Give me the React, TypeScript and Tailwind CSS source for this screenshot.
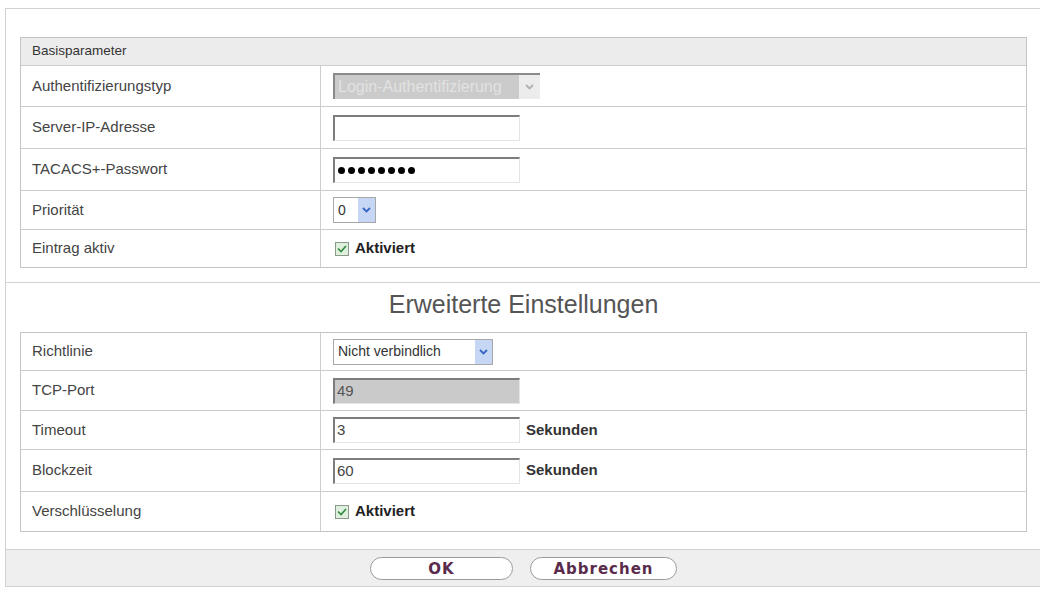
import React from "react";

const font = { fontFamily: '"Liberation Sans", Arial, sans-serif' };
const buttonFont = { fontFamily: '"DejaVu Sans", Verdana, sans-serif' };

const Chevron = ({ color }: { color: string }) => (
    <svg width="9" height="6" viewBox="0 0 9 6">
        <path d="M1 1 L4.5 4.5 L8 1" fill="none" stroke={color} strokeWidth="1.8" />
    </svg>
);

const Row = ({ label, height, children, last }: { label: string; height: string; children?: React.ReactNode; last?: boolean }) =>
{
    return (
        <div className={`flex ${height} ${last ? "" : "border-b border-[#cdcdcd]"}`}>
            <div className="w-[300px] shrink-0 border-r border-[#cdcdcd] pl-[11px] flex items-center text-[15px] text-[#444]">{label}</div>
            <div className="flex-1 pl-[12px] flex items-center">{children}</div>
        </div>
    );
};

const TextBox = ({ value, disabled, password }: { value?: string; disabled?: boolean; password?: boolean }) => (
    <div className={`w-[187px] h-[26px] border-t-2 border-l-2 border-t-[#7d7d7d] border-l-[#7d7d7d] border-r border-b border-r-[#e4e4e4] border-b-[#e4e4e4] flex items-center pl-[2px] text-[15px] ${disabled ? "bg-[#cacaca] text-[#555]" : "bg-white text-[#444]"}`}>
        {password
            ? <span className="flex gap-[3px] pl-[1px]">
                {[0, 1, 2, 3, 4, 5, 6, 7].map((i) => <span key={i} className="w-[7px] h-[7px] rounded-full bg-black" />)}
              </span>
            : value}
    </div>
);

const Select = ({ value, width }: { value: string; width: string }) => (
    <div className={`${width} h-[26px] border border-[#a8a8a8] bg-white flex items-center justify-between text-[14px] text-[#333]`}>
        <span className="pl-[4px]">{value}</span>
        <span className="w-[17px] h-full bg-[#c5d7f4] flex items-center justify-center">
            <Chevron color="#3866c4" />
        </span>
    </div>
);

const Check = () => (
    <div className="flex items-center gap-[6px] pl-[2px]">
        <span className="w-[14px] h-[14px] border border-[#8a9a8a] bg-[#dff0df] flex items-center justify-center">
            <svg width="10" height="8" viewBox="0 0 10 8">
                <path d="M1 3.5 L4 6.5 L9 1" fill="none" stroke="#2f8a3a" strokeWidth="1.6" />
            </svg>
        </span>
        <span className="text-[15px] font-bold text-[#222]">Aktiviert</span>
    </div>
);

const Seconds = () => <span className="ml-[6px] text-[15px] font-bold text-[#333]">Sekunden</span>;

export default function App()
{
    return (
        <div className="w-[1040px] h-[590px] bg-white pt-[8px] pl-[5px] overflow-hidden" style={font}>
            <div className="w-[1040px] border-t border-l border-[#d2d2d2]">
                <div className="pt-[28px] pb-[14px] pl-[14px] w-[1021px]">
                    <div className="border border-[#c4c4c4]">
                        <div className="h-[28px] bg-[#ececec] border-b border-[#cdcdcd] flex items-center pl-[11px] text-[13.5px] text-[#333]">Basisparameter</div>
                        <Row label="Authentifizierungstyp" height="h-[41px]">
                            <div className="w-[207px] h-[26px] border-t-2 border-l-2 border-[#8a8a8a] flex items-center">
                                <span className="w-[184px] h-full bg-[#cbcbcb] text-[#e2e2e2] text-[16px] pl-[3px] flex items-center overflow-hidden whitespace-nowrap">Login-Authentifizierung</span>
                                <span className="flex-1 h-full bg-[#ececec] flex items-center justify-center"><Chevron color="#b0b0b0" /></span>
                            </div>
                        </Row>
                        <Row label="Server-IP-Adresse" height="h-[42px]"><TextBox /></Row>
                        <Row label="TACACS+-Passwort" height="h-[42px]"><TextBox password /></Row>
                        <Row label="Priorität" height="h-[39px]"><Select value="0" width="w-[43px]" /></Row>
                        <Row label="Eintrag aktiv" height="h-[37px]" last><Check /></Row>
                    </div>
                </div>
                <div className="border-t border-[#d2d2d2] h-[50px] flex items-start justify-center pt-[3px] text-[25px] text-[#555] w-[1035px]">Erweiterte Einstellungen</div>
                <div className="pb-[17px] pl-[14px] w-[1021px]">
                    <div className="border border-[#c4c4c4]">
                        <Row label="Richtlinie" height="h-[38px]"><Select value="Nicht verbindlich" width="w-[160px]" /></Row>
                        <Row label="TCP-Port" height="h-[40px]"><TextBox value="49" disabled /></Row>
                        <Row label="Timeout" height="h-[39px]"><TextBox value="3" /><Seconds /></Row>
                        <Row label="Blockzeit" height="h-[42px]"><TextBox value="60" /><Seconds /></Row>
                        <Row label="Verschlüsselung" height="h-[39px]" last><Check /></Row>
                    </div>
                </div>
                <div className="h-[38px] w-[1035px] bg-[#efefef] border-t border-b border-[#d2d2d2] flex items-center justify-center gap-[17px]" style={buttonFont}>
                    <button className="w-[143px] h-[23px] rounded-full border border-[#9a9a9a] bg-white text-[15px] font-bold tracking-[1px] text-[#5a2c4c]">OK</button>
                    <button className="w-[147px] h-[23px] rounded-full border border-[#9a9a9a] bg-white text-[15px] font-bold tracking-[1px] text-[#5a2c4c]">Abbrechen</button>
                </div>
            </div>
        </div>
    );
}
